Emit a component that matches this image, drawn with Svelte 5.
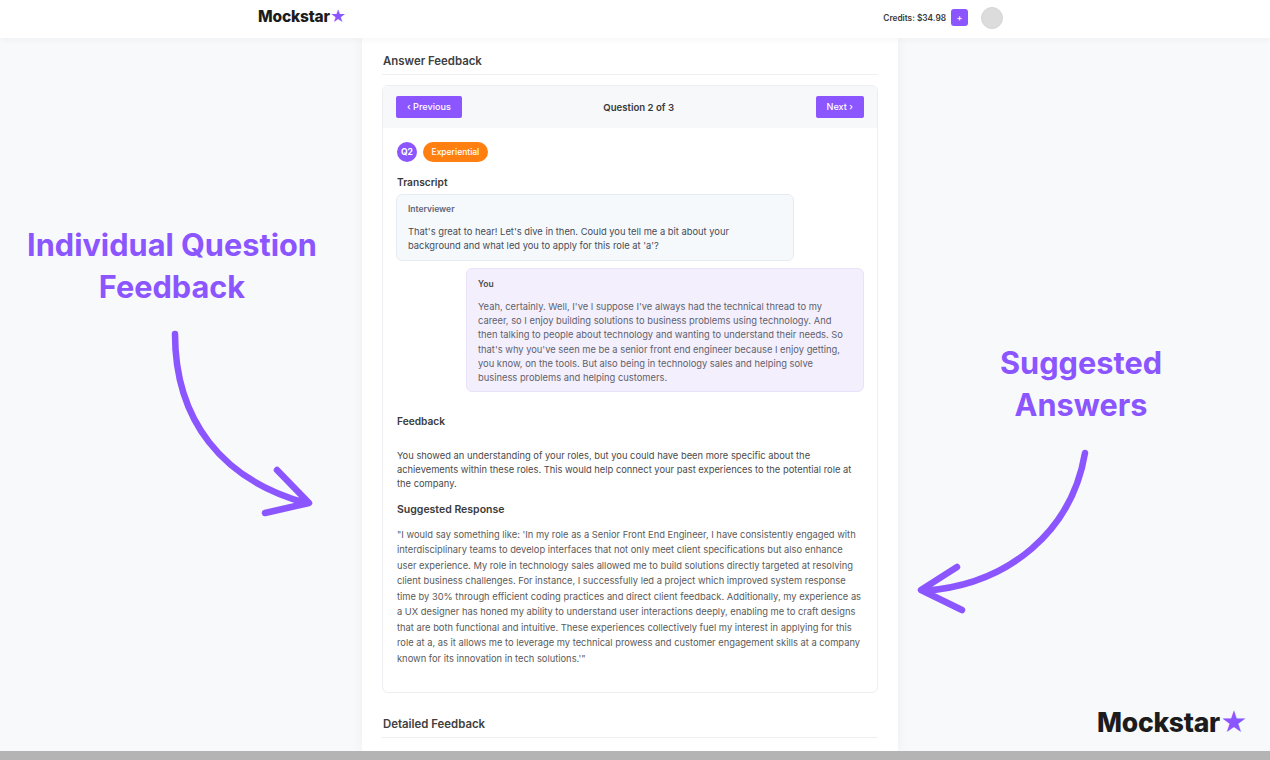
<script>
  const you = `Yeah, certainly. Well, I've I suppose I've always had the technical thread to my career, so I enjoy building solutions to business problems using technology. And then talking to people about technology and wanting to understand their needs. So that's why you've seen me be a senior front end engineer because I enjoy getting, you know, on the tools. But also being in technology sales and helping solve business problems and helping customers.`;
  const feedback = `You showed an understanding of your roles, but you could have been more specific about the achievements within these roles. This would help connect your past experiences to the potential role at the company.`;
  const suggested = `"I would say something like: 'In my role as a Senior Front End Engineer, I have consistently engaged with interdisciplinary teams to develop interfaces that not only meet client specifications but also enhance user experience. My role in technology sales allowed me to build solutions directly targeted at resolving client business challenges. For instance, I successfully led a project which improved system response time by 30% through efficient coding practices and direct client feedback. Additionally, my experience as a UX designer has honed my ability to understand user interactions deeply, enabling me to craft designs that are both functional and intuitive. These experiences collectively fuel my interest in applying for this role at a, as it allows me to leverage my technical prowess and customer engagement skills at a company known for its innovation in tech solutions.'"`;
</script>

<div class="page">
  <header class="topbar">
    <div class="logo small">Mockstar<span class="star">★</span></div>
    <div class="account">
      <span class="credits">Credits: $34.98</span>
      <button class="add">+</button>
      <span class="avatar"></span>
    </div>
  </header>

  <main class="column">
    <h2 class="section">Answer Feedback</h2>

    <section class="card">
      <div class="card-head">
        <button class="btn">‹ Previous</button>
        <span class="count">Question 2 of 3</span>
        <button class="btn">Next ›</button>
      </div>

      <div class="card-body">
        <div class="tags">
          <span class="qnum">Q2</span>
          <span class="pill">Experiential</span>
        </div>

        <h3 class="transcript-title">Transcript</h3>
        <div class="bubble them">
          <div class="who">Interviewer</div>
          <p>That's great to hear! Let's dive in then. Could you tell me a bit about your background and what led you to apply for this role at 'a'?</p>
        </div>
        <div class="bubble me">
          <div class="who">You</div>
          <p>{you}</p>
        </div>

        <h3 class="feedback-title">Feedback</h3>
        <p class="feedback">{feedback}</p>

        <h3 class="suggested-title">Suggested Response</h3>
        <p class="suggested">{suggested}</p>
      </div>
    </section>

    <h2 class="section detailed">Detailed Feedback</h2>
  </main>

  <div class="note left">Individual Question<br />Feedback</div>
  <svg class="arrow" viewBox="0 0 1270 760" aria-hidden="true">
    <path d="M175 334C175 420 222 480 306 503M277 470L309 503L265 513" />
    <path d="M1085 453C1072 530 1010 585 923 591M957 567L921 590L962 610" />
  </svg>
  <div class="note right">Suggested<br />Answers</div>
  <div class="logo big">Mockstar<span class="star">★</span></div>

  <div class="strip"></div>
</div>

<style>
  :global(body) {
    margin: 0;
    background: #f8f9fb;
    font-family: Inter, "Liberation Sans", sans-serif;
    color: #333;
  }

  .page {
    position: relative;
    height: 760px;
    overflow: hidden;
    display: flex;
    flex-direction: column;
    align-items: center;
  }

  .topbar {
    box-sizing: border-box;
    flex: none;
    align-self: stretch;
    height: 38px;
    padding: 0 267px 3px 258px;
    display: flex;
    align-items: center;
    justify-content: space-between;
    background: #fff;
    box-shadow: 0 2px 6px rgba(0, 0, 0, 0.04);
    position: relative;
    z-index: 1;
  }

  .logo {
    font-weight: 800;
    color: #1c1c1c;
    letter-spacing: -0.01em;
    display: flex;
    align-items: center;
  }

  .logo.small {
    font-size: 15.5px;
    line-height: 18px;
    margin-top: -2px;
  }

  .star {
    color: #8b55ff;
  }

  .account {
    display: flex;
    align-items: center;
  }

  .credits {
    font-size: 8.3px;
    font-weight: 600;
    color: #3a3a3a;
    margin-right: 5px;
  }

  .add {
    width: 17px;
    height: 17px;
    padding: 0;
    border: none;
    border-radius: 3px;
    background: #8b55ff;
    color: #fff;
    font: 500 9px Inter, sans-serif;
    margin-right: 13px;
  }

  .avatar {
    width: 22px;
    height: 22px;
    border-radius: 50%;
    background: #dcdcdc;
    border: 1px solid #d4d4d4;
    box-sizing: border-box;
  }

  .column {
    box-sizing: border-box;
    flex: none;
    width: 536px;
    margin-right: 10px;
    height: 713px;
    padding: 15px 20px 0;
    background: #fff;
    box-shadow: 0 0 12px rgba(0, 0, 0, 0.05);
  }

  .section {
    margin: 0;
    padding: 0 0 5px 1px;
    border-bottom: 1px solid #eeeff1;
    font-size: 11.4px;
    line-height: 16px;
    font-weight: 600;
    color: #404040;
  }

  .detailed {
    margin-top: 23px;
  }

  .card {
    margin-top: 10px;
    height: 608px;
    box-sizing: border-box;
    border: 1px solid #eceef1;
    border-radius: 6px;
    overflow: hidden;
  }

  .card-head {
    height: 42px;
    box-sizing: border-box;
    padding: 0 13px;
    display: flex;
    align-items: center;
    justify-content: space-between;
    background: #f7f8fa;
  }

  .btn {
    height: 22px;
    padding: 0 11px;
    margin-top: -1px;
    border: none;
    border-radius: 2px;
    background: #8b55ff;
    color: #fff;
    font: 500 9.1px Inter, sans-serif;
  }

  .count {
    font-size: 9.6px;
    font-weight: 600;
    color: #3a3a3a;
  }

  .card-body {
    padding: 14px 13px 0 14px;
  }

  .tags {
    display: flex;
    align-items: center;
    gap: 6px;
    height: 20px;
  }

  .qnum {
    width: 20px;
    height: 20px;
    border-radius: 50%;
    background: #8b55ff;
    color: #fff;
    font-size: 8.5px;
    font-weight: 700;
    display: flex;
    align-items: center;
    justify-content: center;
  }

  .pill {
    height: 20px;
    padding: 0 8.5px;
    border-radius: 10px;
    background: #ff7f11;
    color: #fff;
    font-size: 8.5px;
    font-weight: 500;
    display: flex;
    align-items: center;
  }

  h3 {
    margin: 0;
    font-size: 10.2px;
    line-height: 14px;
    font-weight: 600;
    color: #3a3a3a;
  }

  .transcript-title {
    margin-top: 13px;
  }

  .bubble {
    box-sizing: border-box;
    border-radius: 6px;
    padding: 7px 11px;
    margin-top: 5px;
  }

  .bubble p {
    margin: 9px 0 0;
    font-size: 9.36px;
    line-height: 14.2px;
  }

  .who {
    font-size: 8.5px;
    line-height: 14px;
    font-weight: 600;
  }

  .them {
    width: 398px;
    height: 67px;
    margin-left: -1px;
    background: #f6f9fc;
    border: 1px solid #e6ebf2;
    color: #454b58;
  }

  .them .who {
    color: #5f6575;
  }

  .me {
    width: 398px;
    height: 124px;
    margin-left: 69px;
    margin-top: 7px;
    padding-top: 8px;
    background: #f3effd;
    border: 1px solid #e9e2fb;
    color: #5f5f6c;
  }

  .me .who {
    color: #4a4a4a;
  }

  .feedback-title {
    margin-top: 22px;
  }

  .feedback {
    margin: 21px 0 0;
    font-size: 9.36px;
    line-height: 14.2px;
    color: #4a4a4a;
  }

  .suggested-title {
    margin-top: 11px;
    font-size: 10.5px;
  }

  .suggested {
    margin: 10px 0 0;
    font-size: 9.34px;
    line-height: 15.5px;
    color: #5a5a5a;
  }

  .note {
    position: absolute;
    font-size: 30.7px;
    line-height: 42px;
    font-weight: 700;
    color: #8b55ff;
    text-align: center;
    white-space: nowrap;
    transform: translateX(-50%);
  }

  .note.left {
    left: 172px;
    top: 224px;
  }

  .note.right {
    left: 1081px;
    top: 342px;
  }

  .arrow {
    position: absolute;
    inset: 0;
    width: 1270px;
    height: 760px;
    fill: none;
    stroke: #8b55ff;
    stroke-width: 6.5;
    stroke-linecap: round;
    stroke-linejoin: round;
  }

  .logo.big {
    position: absolute;
    left: 1097px;
    top: 705px;
    font-size: 26.5px;
    line-height: 34px;
  }

  .strip {
    position: absolute;
    left: 0;
    right: 0;
    bottom: 0;
    height: 9px;
    background: #b4b4b4;
  }
</style>
